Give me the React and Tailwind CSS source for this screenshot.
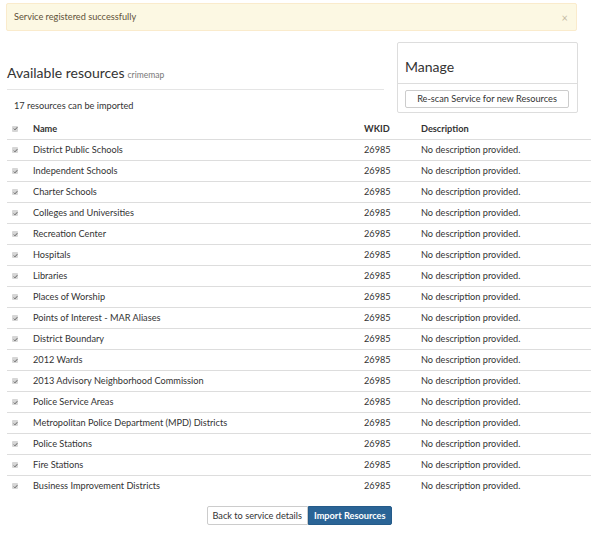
import React from 'react'

const resources = [
  'District Public Schools',
  'Independent Schools',
  'Charter Schools',
  'Colleges and Universities',
  'Recreation Center',
  'Hospitals',
  'Libraries',
  'Places of Worship',
  'Points of Interest - MAR Aliases',
  'District Boundary',
  '2012 Wards',
  '2013 Advisory Neighborhood Commission',
  'Police Service Areas',
  'Metropolitan Police Department (MPD) Districts',
  'Police Stations',
  'Fire Stations',
  'Business Improvement Districts',
]

function Check(){
  return (
    <span className="inline-flex w-[6px] h-[6px] bg-[#d6d6d6] rounded-[1px] items-center justify-center">
      <svg width="5" height="5" viewBox="0 0 5 5">
        <path d="M0.8 2.6 L2 3.8 L4.3 1.2" stroke="#555" strokeWidth="0.9" fill="none" />
      </svg>
    </span>
  )
}

function Row({ name, wkid, desc, header, first }){
  return (
    <div className={`flex items-center h-[21px] ${first ? '' : 'border-t border-[#dddddd]'} ${header ? 'font-bold' : ''}`}>
      <div className="w-[26px] pl-[5px] flex items-center"><Check /></div>
      <div className="w-[331px]">{name}</div>
      <div className="w-[57px]">{wkid}</div>
      <div className="flex-1">{desc}</div>
    </div>
  )
}

export default function App(){
  return (
    <div className="w-[598px] h-[534px] bg-white text-[#333] pt-[3px] pl-[6px]" style={{ fontFamily: 'Lato, "Open Sans", sans-serif' }}>
      <div className="w-[571px] h-[28px] bg-[#fcf8e3] border border-[#faebcc] rounded-[2px] flex items-center justify-between pl-[7px] pr-[8px] text-[9.2px] text-[#5f5239]">
        <span>Service registered successfully</span>
        <span className="text-[11px] text-[#c4bba4] leading-none">×</span>
      </div>

      <div className="flex mt-[11px]">
        <div className="w-[377px] ml-px">
          <div className="mt-[21px] h-[20px] flex items-baseline gap-[3px] text-[#333]">
            <span className="text-[14px] leading-[20px]">Available resources</span>
            <span className="text-[8.5px] leading-none text-[#777]">crimemap</span>
          </div>
          <div className="mt-[6px] border-t border-[#e5e5e5]" />
          <p className="mt-[9px] pl-[7px] text-[9.2px] leading-[14px]">17 resources can be imported</p>
        </div>
        <div className="ml-[13px] w-[181px] h-[71px] border border-[#dddddd] rounded-[2px] flex flex-col">
          <div className="h-[41px] border-b border-[#dddddd] flex items-end pb-[6px] pl-[7px] text-[14px] leading-[20px]">Manage</div>
          <div className="px-[7px] pt-[6px] flex">
            <button className="block w-[164px] h-[18px] border border-[#cccccc] rounded-[2px] bg-white text-[9.2px] text-[#333] leading-none">Re-scan Service for new Resources</button>
          </div>
        </div>
      </div>

      <div className="mt-[5px] ml-px w-[584px] text-[9.2px]">
        <Row header first name="Name" wkid="WKID" desc="Description" />
        {resources.map((r) => (
          <Row key={r} name={r} wkid="26985" desc="No description provided." />
        ))}
      </div>

      <div className="flex justify-center mt-[10px] pr-[6px]">
        <div className="flex">
          <button className="h-[19px] px-[5px] border border-[#cccccc] rounded-l-[2px] bg-white text-[9.2px] text-[#333]">Back to service details</button>
          <button className="h-[19px] px-[5px] border border-[#255b89] rounded-r-[2px] bg-[#2a6496] text-white text-[9.2px] font-bold">Import Resources</button>
        </div>
      </div>
    </div>
  )
}
